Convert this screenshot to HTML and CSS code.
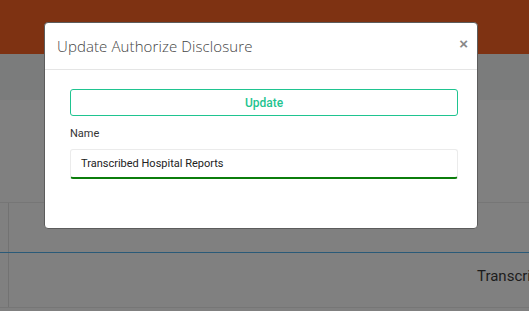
FILE: index.html
```html
<!DOCTYPE html>
<html>
<head>
<meta charset="utf-8">
<link rel="stylesheet" href="styles.css">
</head>
<body>
<div class="page">
  <div class="topbar"></div>
  <div class="subbar"></div>
  <div class="content">
    <div class="table">
      <div class="row head"><div class="gutter"></div><div class="cell"></div></div>
      <div class="row body"><div class="gutter"></div><div class="cell">Transcribed Hospital Reports</div></div>
    </div>
  </div>
</div>
<div class="modal">
  <div class="modal-header">
    <h4 class="modal-title">Update Authorize Disclosure</h4>
    <span class="close">&times;</span>
  </div>
  <div class="modal-body">
    <button class="btn-update">Update</button>
    <label class="label">Name</label>
    <div class="input">Transcribed Hospital Reports</div>
  </div>
</div>
</body>
</html>
```
FILE: styles.css
```css
* { box-sizing: border-box; }
html, body { margin: 0; padding: 0; }
body { width: 529px; height: 311px; overflow: hidden; font-family: Roboto, "Liberation Sans", sans-serif; background: #808080; position: relative; }
.page { display: flex; flex-direction: column; height: 311px; }
.topbar { height: 54px; background: #7e3212; }
.subbar { height: 46px; background: #7b7c7c; }
.content { flex: 1; background: #808080; padding-top: 102px; }
.table { border-top: 1px solid #767676; }
.row { display: flex; }
.gutter { width: 9px; border-right: 1px solid #727272; }
.cell { flex: 1; }
.row.head { height: 50px; border-bottom: 1px solid #2a5a78; }
.row.body { height: 55px; border-bottom: 1px solid #767676; }
.row.body .cell { padding-left: 468px; padding-top: 14px; font-size: 15px; color: #1c1c1c; white-space: nowrap; overflow: hidden; }
.modal { position: absolute; left: 44px; top: 22px; width: 434px; height: 207px; background: #fff; border: 1px solid #5c5c5c; border-radius: 4px; }
.modal-header { height: 47px; border-bottom: 1px solid #e5e5e5; display: flex; align-items: center; justify-content: space-between; padding: 0 9px 0 12px; }
.modal-title { margin: 0; font-family: "Open Sans", sans-serif; font-weight: 300; font-size: 15px; color: #444; letter-spacing: 0.1px; }
.close { font-size: 15px; font-weight: 700; color: #888; margin-top: -5px; font-family: "Liberation Sans", sans-serif; }
.modal-body { padding: 19px 19px 20px 25px; display: flex; flex-direction: column; }
.btn-update { height: 27px; border: 1px solid #1fc490; border-radius: 3px; background: #fff; color: #1fc490; font-family: Roboto, sans-serif; font-weight: 500; font-size: 12px; padding: 0; }
.label { font-size: 11px; color: #333; margin-top: 11px; line-height: 14px; }
.input { margin-top: 8px; height: 30px; border: 1px solid #ebebeb; border-bottom: 2px solid #0b7d0b; border-radius: 3px; font-size: 11px; color: #222; padding: 7px 10px 0; }
```
